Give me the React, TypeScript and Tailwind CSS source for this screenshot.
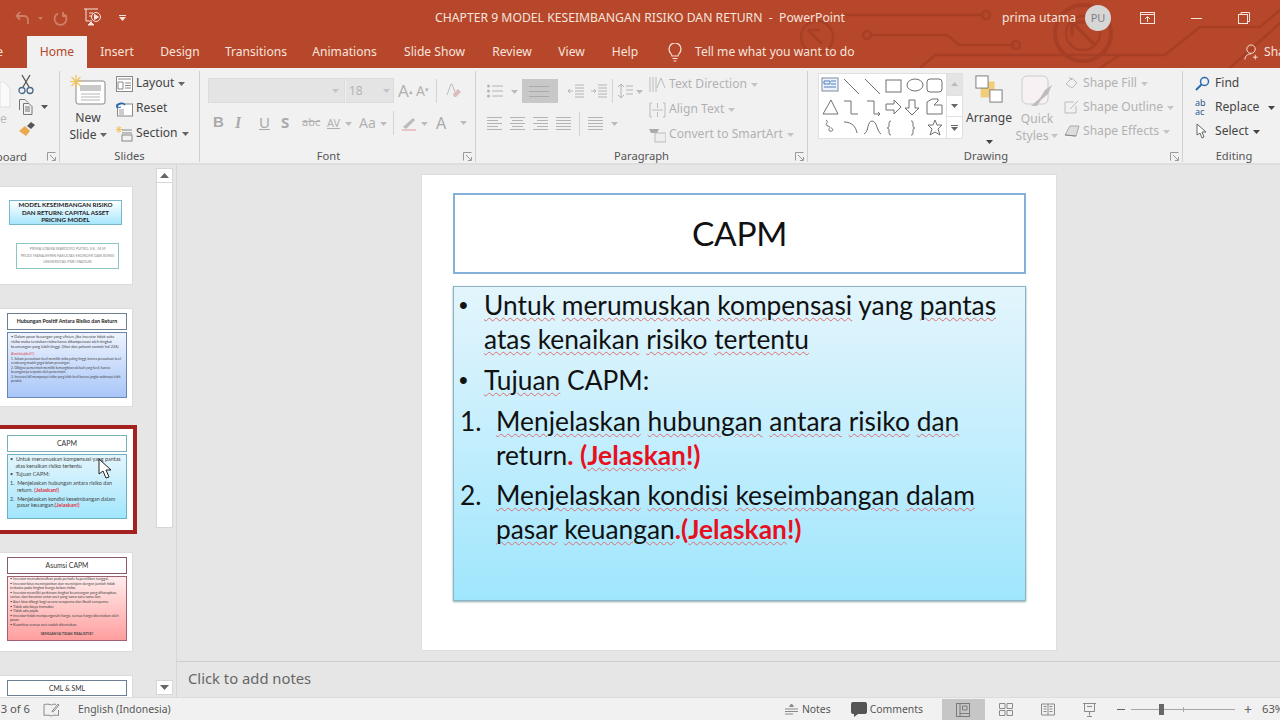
import React from "react";

const UI = "font-['Noto_Sans','Open_Sans',sans-serif]";
const Caret = ({ c = "#666" }: { c?: string }) => (
  <svg width="7" height="4" viewBox="0 0 7 4" className="inline-block shrink-0"><path d="M0 0h7L3.5 4z" fill={c} /></svg>
);
const Launcher = () => (
  <svg width="9" height="9" viewBox="0 0 9 9" fill="none" stroke="#9a9a9a" strokeWidth="1"><path d="M.5 8.5v-8h8M8.5 5v3.5H5M3 3l5 5" /></svg>
);
const Sep = ({ h = "h-[24px]" }: { h?: string }) => <div className={`w-px ${h} bg-[#d4d4d4]`} />;
const W = ({ children }: { children: React.ReactNode }) => (
  <span className="underline decoration-wavy decoration-[#dc7070] decoration-1 underline-offset-[2px]">{children}</span>
);

function Group({ w, label, children, launcher, labelClass = "" }: { w: string; label: string; children: React.ReactNode; launcher?: boolean; labelClass?: string }) {
  return (
    <div className={`relative flex flex-col h-[91px] mt-[3px] border-r border-[#d0d0d0] shrink-0 ${w}`}>
      <div className="flex h-[78px]">{children}</div>
      <div className={`flex items-center justify-center h-[13px] pt-[2px] text-[11.2px] text-[#555] ${labelClass}`}>{label}</div>
      {launcher && <div className="absolute right-[3px] bottom-[1px] leading-none"><Launcher /></div>}
    </div>
  );
}

const Line = ({ w, cls = "" }: { w: number; cls?: string }) => <i className={`block h-px bg-[#b4b4b4] ${cls}`} style={{ width: w }} />;
const AlignIcon = ({ a }: { a: "l" | "c" | "r" | "j" }) => {
  const s = a === "l" ? "items-start" : a === "c" ? "items-center" : a === "r" ? "items-end" : "items-stretch";
  return (
    <div className={`flex flex-col gap-[2px] w-[15px] ${s}`}>
      <Line w={15} /><Line w={a === "j" ? 15 : 11} /><Line w={15} /><Line w={a === "j" ? 15 : 11} /><Line w={15} />
    </div>
  );
};

function ShapesGallery() {
  const s = "#707070";
  return (
    <div className="flex w-[145px] h-[66px] mt-[2px] ml-[10px] bg-white border border-[#e0e0e0]">
      <svg width="127" height="64" viewBox="0 0 127 64" fill="none" stroke={s} strokeWidth="1" className="shrink-0">
        <rect x="3" y="4" width="16" height="13" stroke="#7a8aa0" fill="#eef3fb" />
        <path d="M5 7h6v3H5zM12 7h5M12 10h5M5 13h12" stroke="#4a7ac0" />
        <path d="M25 5l15 15M46 5l15 15" />
        <rect x="67" y="6" width="15" height="12" />
        <ellipse cx="96" cy="11" rx="8" ry="6" />
        <rect x="108" y="5" width="15" height="13" rx="3" />
        <path d="M12 26l7 14H4z" />
        <path d="M25 27h7v13h7M48 27h7v13h6m-2-2l2 2-2 2" />
        <path d="M67 30h8v-4l7 7-7 7v-4h-8zM96 26v8h4l-7 7-7-7h4v-8z" />
        <path d="M108 28l5-3h6v2l-4 4h8v9h-15z" />
        <path d="M7 46c4 2-3 5 2 6s-2 4 2 5 3-3 1-3M25 48c8 0 12 5 13 11M45 60c5-2 3-13 8-13s5 11 9 13M72 47c-2 0-2 1-2 4s-1 3-2 3c1 0 2 0 2 3s0 4 2 4M92 47c2 0 2 1 2 4s1 3 2 3c-1 0-2 0-2 3s0 4-2 4" />
        <path d="M116 46l2 5h5l-4 4 2 6-5-3-5 3 2-6-4-4h5z" />
      </svg>
      <div className="flex flex-col w-[16px] border-l border-[#e0e0e0]">
        <div className="flex-1 flex items-center justify-center bg-[#e4e4e4]"><svg width="7" height="4"><path d="M0 4h7L3.5 0z" fill="#bbb" /></svg></div>
        <div className="flex-1 flex items-center justify-center border-y border-[#e0e0e0]"><Caret /></div>
        <div className="flex-1 flex flex-col items-center justify-center gap-px"><i className="block w-[7px] h-px bg-[#666]" /><Caret /></div>
      </div>
    </div>
  );
}

function Ribbon() {
  const dis = "text-[#b1b1b1]";
  const row = "flex items-center h-[25px] whitespace-nowrap";
  return (
    <div className={`flex h-[95px] bg-[#f1f1f1] text-[12.1px] text-[#444] shrink-0 ${UI}`}>
      <Group w="w-[60px]" label="" launcher>
        <div className="w-[60px] relative">
          <svg width="11" height="26" viewBox="0 0 11 26" className="absolute left-0 top-[11px]"><path d="M0 0h4l6 6v19H0z" fill="#fafafa" stroke="#ddd" /></svg>
          <span className="absolute left-0 top-[42px] text-[#bbb] leading-none">e</span>
          <div className="flex flex-col items-start pl-[18px] pt-[3px]">
            <svg width="16" height="22" viewBox="0 0 16 22" fill="none" stroke="#4a6a8a" strokeWidth="1.3"><path d="M4 1l7 12M12 1L5 13" stroke="#555" /><circle cx="4" cy="16.5" r="3" /><circle cx="12" cy="16.5" r="3" /></svg>
            <div className="flex items-center gap-[7px] mt-[2px]">
              <svg width="16" height="17" viewBox="0 0 16 17" fill="none" stroke="#777"><path d="M1.5 12V1.5H7l3 3M5.5 5.5H11l3 3v8H5.5z" /><path d="M7 9h5M7 11h5M7 13h5" /></svg>
              <Caret c="#555" />
            </div>
            <svg width="18" height="16" viewBox="0 0 18 16" className="mt-[6px]"><path d="M1 10l6-5 5 5-4 5z" fill="#e9a94e" /><path d="M9 5l4-4 4 3-4 4z" fill="#555" /></svg>
          </div>
          <div className="absolute left-0 top-[79px] w-[30px] h-[13px] flex justify-end overflow-hidden text-[11.2px] text-[#555] leading-[13px]"><span className="whitespace-nowrap pr-[3px]">Clipboard</span></div>
        </div>
      </Group>
      <Group w="w-[140px]" label="Slides">
        <div className="flex flex-col items-center w-[56px] pt-[4px] leading-[17px]">
          <svg width="36" height="30" viewBox="0 0 36 30" fill="none">
            <rect x="6" y="6" width="29" height="23" rx="2" fill="#fff" stroke="#888" />
            <rect x="10" y="10" width="21" height="6" fill="#c9c9c9" />
            <path d="M11 19h19M11 22h19M11 25h19" stroke="#b5b5b5" />
            <path d="M6 0v13M0 6.5h13M1.500 2L10.500 11M10.500 2L1.500 11" stroke="#f0c35c" strokeWidth="1.2" />
          </svg>
          <span className="mt-[4px]">New</span>
          <span className="flex items-center gap-[3px]">Slide <Caret /></span>
        </div>
        <div className="flex flex-col">
          <div className={row}>
            <svg width="17" height="16" viewBox="0 0 17 16" fill="none" stroke="#888" className="mr-[3px]"><rect x=".5" y=".5" width="16" height="15" fill="#fff" /><path d="M2 3h13M2 6h5v7H2zM9 7h6M9 9.500h6M9 12h6" /></svg>
            Layout <span className="ml-[4px]"><Caret /></span>
          </div>
          <div className={row}>
            <svg width="17" height="16" viewBox="0 0 17 16" fill="none" stroke="#888" className="mr-[3px]"><rect x="1.5" y="3" width="15" height="12" fill="#fff" /><rect x="3" y="8" width="5" height="6" fill="#ccc" stroke="none" /><path d="M1 6c1-4 6-5 8-2" stroke="#2a6ab0" strokeWidth="1.6" /><path d="M0 3l1 4 4-1" stroke="#2a6ab0" /></svg>
            Reset
          </div>
          <div className={row}>
            <svg width="17" height="16" viewBox="0 0 17 16" fill="none" stroke="#888" className="mr-[3px]"><path d="M3 0v7M0 3.500h7M1 1l4 5M5 1L1 6" stroke="#f0c35c" /><path d="M6 4h10M6 7h10" /><rect x="6" y="9" width="10" height="6" /></svg>
            Section <span className="ml-[4px]"><Caret /></span>
          </div>
        </div>
      </Group>
      <Group w="w-[276px]" label="Font" launcher labelClass="pr-[18px]">
        <div className="flex flex-col pl-[8px] pt-[7px]">
          <div className="flex items-center h-[25px]">
            <div className="flex items-center justify-end w-[137px] h-[25px] bg-[#e4e4e4] border border-[#dcdcdc] pr-[5px]"><Caret c="#c4c4c4" /></div>
            <div className="flex items-center justify-between w-[49px] h-[25px] bg-[#e4e4e4] border border-[#dcdcdc] border-l-[#f1f1f1] px-[3px] text-[#b5b5b5] text-[12px]">18<Caret c="#c4c4c4" /></div>
            <span className={`ml-[4px] text-[17px] leading-none ${dis}`}>A<sup className="text-[7px]">▴</sup></span>
            <span className={`ml-[3px] text-[14px] leading-none ${dis}`}>A<sup className="text-[7px]">▾</sup></span>
            <div className="ml-[7px] mr-[7px]"><Sep /></div>
            <svg width="18" height="18" viewBox="0 0 18 18"><path d="M3 13l4-11h1l3 8" fill="none" stroke="#bbb" /><path d="M9 12l5-5 3 3-5 5H10z" fill="#ddbcbc" /></svg>
          </div>
          <div className={`flex items-center h-[25px] mt-[7px] pl-[5px] text-[14px] ${dis}`}>
            <b className="w-[22px] font-['Liberation_Sans',sans-serif] text-[15px] text-[#aaa]">B</b>
            <i className="w-[24px] font-['Liberation_Serif',serif] font-bold text-[16px] text-[#aaa]">I</i>
            <span className="w-[22px] underline text-[#aaa] text-[15px]">U</span>
            <b className="w-[21px] text-[#aaa] text-[15px]">S</b>
            <span className="w-[25px] line-through text-[11px]">abc</span>
            <span className="w-[18px] text-[11px] underline leading-none">AV</span>
            <span className="w-[14px]"><Caret c="#bbb" /></span>
            <span className="text-[14px] w-[21px]">Aa</span>
            <span className="w-[13px]"><Caret c="#bbb" /></span>
            <div className="mr-[6px]"><Sep /></div>
            <svg width="18" height="18" viewBox="0 0 18 18" fill="none"><path d="M3 13L13 4l2 2-9 9z" fill="#bbb" /><path d="M2 16h14" stroke="#e8c4c4" strokeWidth="2" /></svg>
            <span className="w-[13px] ml-[3px]"><Caret c="#bbb" /></span>
            <span className="ml-[2px] w-[24px] text-[16px] text-[#aaa]">A</span>
            <Caret c="#bbb" />
          </div>
        </div>
      </Group>
      <Group w="w-[332px]" label="Paragraph" launcher>
        <div className="flex flex-col pl-[11px] pt-[8px] w-[173px] shrink-0">
          <div className="flex items-center h-[24px]">
            <svg width="16" height="14" viewBox="0 0 16 14" fill="none" stroke="#b4b4b4"><circle cx="1.500" cy="2" r="1.500" fill="#b4b4b4" stroke="none" /><circle cx="1.500" cy="7" r="1.500" fill="#b4b4b4" stroke="none" /><circle cx="1.500" cy="12" r="1.500" fill="#b4b4b4" stroke="none" /><path d="M5 2h11M5 7h11M5 12h11" /></svg>
            <span className="ml-[8px] w-[11px]"><Caret c="#bbb" /></span>
            <div className="flex flex-col justify-center gap-[4px] w-[36px] h-[24px] bg-[#c8c8c8] px-[4px]"><i className="block h-px w-[20px] bg-[#aaa] ml-[3px]" /><i className="block h-px w-[20px] bg-[#aaa] ml-[3px]" /><i className="block h-px w-[20px] bg-[#aaa] ml-[3px]" /></div>
            <div className="ml-[10px]"><svg width="16" height="14" viewBox="0 0 16 14" fill="none" stroke="#b4b4b4"><path d="M7 1h9M7 4h9M7 7h9M7 10h9M7 13h9M5 7H0m2-2L0 7l2 2" /></svg></div>
            <div className="ml-[7px]"><svg width="16" height="14" viewBox="0 0 16 14" fill="none" stroke="#b4b4b4"><path d="M7 1h9M7 4h9M7 7h9M7 10h9M7 13h9M0 7h5M3 5l2 2-2 2" /></svg></div>
            <div className="mx-[5px]"><Sep /></div>
            <svg width="15" height="16" viewBox="0 0 15 16" fill="none" stroke="#b4b4b4"><path d="M3 1v14M0 4l3-3 3 3M0 12l3 3 3-3M8 3h7M8 7h7M8 11h7" /></svg>
            <span className="ml-[3px]"><Caret c="#bbb" /></span>
          </div>
          <div className="flex items-center h-[25px] mt-[8px] gap-[8px]">
            <AlignIcon a="l" /><AlignIcon a="c" /><AlignIcon a="r" /><AlignIcon a="j" />
            <Sep />
            <div className="flex gap-[3px]"><AlignIcon a="j" /></div>
            <Caret c="#bbb" />
          </div>
        </div>
        <div className={`flex flex-col pt-[1px] ${dis}`}>
          <div className={row}>
            <svg width="17" height="18" viewBox="0 0 17 18" fill="none" stroke="#bbb" className="mr-[3px]"><path d="M1 1v15M4 1v15M7 1v15" /><path d="M8 12l4-10 4 10" /></svg>
            Text Direction <span className="ml-[4px]"><Caret c="#c4c4c4" /></span>
          </div>
          <div className={row}>
            <svg width="17" height="16" viewBox="0 0 17 16" fill="none" stroke="#bbb" className="mr-[3px]"><path d="M3 1H1v14h2M14 1h2v14h-2M3 8h11M8.500 1v5M8.500 10v5" /></svg>
            Align Text <span className="ml-[4px]"><Caret c="#c4c4c4" /></span>
          </div>
          <div className={row}>
            <svg width="17" height="16" viewBox="0 0 17 16" className="mr-[3px]"><path d="M0 2h10l-2 4H2z" fill="#aaa" /><rect x="6" y="6" width="11" height="9" fill="#eee" stroke="#bbb" /></svg>
            Convert to SmartArt <span className="ml-[4px]"><Caret c="#c4c4c4" /></span>
          </div>
        </div>
      </Group>
      <Group w="w-[375px]" label="Drawing" launcher labelClass="pr-[18px]">
        <ShapesGallery />
        <div className="flex flex-col items-center w-[52px] pt-[4px] leading-[17px]">
          <svg width="30" height="30" viewBox="0 0 30 30"><rect x="11" y="7" width="10" height="10" fill="#f0cd78" /><rect x="6" y="14" width="10" height="10" fill="#f0cd78" /><rect x="1" y="1" width="13" height="13" fill="#fff" stroke="#777" /><rect x="16" y="16" width="13" height="13" fill="#fff" stroke="#777" /></svg>
          <span className="mt-[6px]">Arrange</span>
          <span className="mt-[6px]"><Caret c="#444" /></span>
        </div>
        <div className={`flex flex-col items-center w-[44px] pt-[4px] leading-[17px] ${dis}`}>
          <svg width="32" height="32" viewBox="0 0 32 32"><rect x="1" y="1" width="26" height="28" rx="5" fill="#f7f1f4" stroke="#ccc" /><path d="M10 31l9-8 5-8 7-5-4 9-7 6-4 6z" fill="#bdbdbd" /></svg>
          <span className="mt-[3px]">Quick</span>
          <span className="flex items-center gap-[3px]">Styles<Caret c="#c4c4c4" /></span>
        </div>
        <div className={`flex flex-col ml-[6px] ${dis}`}>
          <div className="flex items-center h-[24px] whitespace-nowrap">
            <svg width="14" height="14" viewBox="0 0 14 14" fill="none" stroke="#bbb" className="mr-[4px]"><path d="M1 8l6-6 5 5-5 5zM4 1l3 3" /></svg>
            Shape Fill <span className="ml-[4px]"><Caret c="#c4c4c4" /></span>
          </div>
          <div className="flex items-center h-[24px] whitespace-nowrap">
            <svg width="16" height="14" viewBox="0 0 16 14" fill="none" stroke="#bbb" className="mr-[3px] -ml-[1px]"><path d="M10 2H1v11h11V6M6 9l8-8" /></svg>
            Shape Outline <span className="ml-[4px]"><Caret c="#c4c4c4" /></span>
          </div>
          <div className="flex items-center h-[24px] whitespace-nowrap">
            <svg width="16" height="14" viewBox="0 0 16 14" className="mr-[3px] -ml-[1px]"><path d="M1 11l5-9h9l-3 10z" fill="#ddd" stroke="#aaa" /><path d="M1 11l11 1" stroke="#888" /></svg>
            Shape Effects <span className="ml-[4px]"><Caret c="#c4c4c4" /></span>
          </div>
        </div>
      </Group>
      <Group w="w-[98px] border-r-0" label="Editing" labelClass="pl-[4px]">
        <div className="flex flex-col pl-[12px]">
          <div className="flex items-center h-[24px] whitespace-nowrap">
            <svg width="15" height="15" viewBox="0 0 15 15" fill="none" stroke="#2a6ab0" strokeWidth="1.5" className="mr-[5px]"><circle cx="9.500" cy="5.500" r="4" /><path d="M6.500 8.500L1 14" strokeWidth="2" /></svg>
            Find
          </div>
          <div className="flex items-center h-[24px] whitespace-nowrap">
            <span className="w-[19px] mr-[1px] text-[9px] leading-[9px] text-[#2a5a90]">ab<br />ac</span>
            Replace <span className="ml-[9px]"><Caret c="#444" /></span>
          </div>
          <div className="flex items-center h-[24px] whitespace-nowrap">
            <svg width="14" height="16" viewBox="0 0 14 16" fill="#fff" stroke="#666" className="mr-[6px]"><path d="M2 1v11l3-2 2 5 2-1-2-5h4z" /></svg>
            Select <span className="ml-[4px]"><Caret c="#444" /></span>
          </div>
        </div>
      </Group>
    </div>
  );
}

function Tabs() {
  const tabs: [string, string][] = [["Insert", "w-[60px]"], ["Design", "w-[66px]"], ["Transitions", "w-[86px]"], ["Animations", "w-[91px]"], ["Slide Show", "w-[89px]"], ["Review", "w-[66px]"], ["View", "w-[53px]"], ["Help", "w-[54px]"]];
  return (
    <div className={`flex h-[32px] items-stretch text-[12.1px] text-[#f6e4de] relative ${UI}`}>
      <div className="w-[27px] overflow-hidden flex items-center justify-end shrink-0"><span className="pr-[24px]">File</span></div>
      <div className="w-[60px] flex items-center justify-center bg-[#f1f1f1] text-[#b7472a] shrink-0">Home</div>
      {tabs.map(([t, w]) => (
        <div key={t} className={`${w} flex items-center justify-center whitespace-nowrap shrink-0`}>{t}</div>
      ))}
      <div className="flex items-center ml-[15px]">
        <svg width="16" height="19" viewBox="0 0 16 19" fill="none" stroke="#f6e4de" strokeWidth="1.2"><path d="M5 13c0-2-3-3-3-7a6 6 0 0112 0c0 4-3 5-3 7zM5.500 15.500h5M6.500 18h3" /></svg>
        <span className="ml-[12px] whitespace-nowrap">Tell me what you want to do</span>
      </div>
      <div className="flex items-center ml-auto gap-[4px] w-[36px] overflow-hidden shrink-0">
        <svg width="16" height="18" viewBox="0 0 17 18" fill="none" stroke="#f6e4de" className="shrink-0"><circle cx="7.500" cy="6" r="4.500" /><path d="M1 17c0-4 3-6 6.500-6M12 12v5M9.500 14.500h5" /></svg>
        <span className="whitespace-nowrap">Share</span>
      </div>
    </div>
  );
}

function TitleBar() {
  return (
    <div className={`relative flex items-center h-[36px] text-[12.2px] text-[#f6e4de] ${UI}`}>
      <div className="flex items-center pl-[15px] w-[435px] shrink-0">
        <svg width="15" height="14" viewBox="0 0 15 14" fill="none" stroke="#cf7f68" strokeWidth="1.8"><path d="M5 1L1.500 5 5 8.500M2 5h7a4 4 0 014 4v4" /></svg>
        <span className="ml-[8px]"><svg width="5" height="3"><path d="M0 0h5L2.500 3z" fill="#cf7f68" /></svg></span>
        <svg width="15" height="15" viewBox="0 0 15 15" fill="none" stroke="#cf7f68" strokeWidth="1.8" className="ml-[10px]"><path d="M10 2.500a6 6 0 11-5 0M10 1v4h4" /></svg>
        <svg width="18" height="20" viewBox="0 0 18 20" fill="none" stroke="#f6e4de" className="ml-[16px]"><path d="M0 1h14M2 1v12h6M5 5h4M5 8h3" /><circle cx="12" cy="9" r="4.500" /><path d="M10.500 6.500l4 2.500-4 2.500z" fill="#f6e4de" /><path d="M4 17l3-3 3 3z" fill="#f6e4de" /></svg>
        <span className="ml-[17px]"><svg width="7" height="7" viewBox="0 0 7 7" fill="#f6e4de"><path d="M0 0h7v1H0zM0 2h7L3.500 6z" /></svg></span>
      </div>
      <div className="whitespace-nowrap w-[567px] shrink-0">CHAPTER 9 MODEL KESEIMBANGAN RISIKO DAN RETURN&nbsp; -&nbsp; PowerPoint</div>
      <div className="whitespace-nowrap w-[74px] shrink-0">prima utama</div>
      <div className="ml-[9px] w-[26px] h-[26px] rounded-full bg-[#d6d6d6] text-[#7f7f7f] text-[11px] flex items-center justify-center shrink-0">PU</div>
      <svg width="15" height="12" viewBox="0 0 15 12" fill="none" stroke="#f6e4de" className="ml-[29px]"><rect x=".5" y=".5" width="14" height="11" /><path d="M0 2.500h15M7.500 10V5M5 7l2.500-2.500L10 7" /></svg>
      <i className="block ml-[36px] w-[11px] h-px bg-[#f6e4de]" />
      <svg width="12" height="12" viewBox="0 0 12 12" fill="none" stroke="#f6e4de" className="ml-[36px]"><rect x=".5" y="2.500" width="9" height="9" /><path d="M3 2.500v-2h8.500v9h-2" /></svg>
    </div>
  );
}

const Thumb = ({ children, sel = false, h = "h-[99px]" }: { children: React.ReactNode; sel?: boolean; h?: string }) => (
  <div className={`relative bg-white shrink-0 ${h} ${sel ? "w-[137px] border-[4px] border-l-0 border-[#a3211f] pl-[7px] pt-[6px] pr-[6px]" : "w-[133px] border border-[#dcdcdc] border-l-0 pl-[7px] pt-[4px] pr-[5px]"}`}>{children}</div>
);

function ThumbPanel() {
  return (
    <div className="relative flex w-[177px] shrink-0 bg-[#e6e6e6] border-r border-[#d6d6d6] font-['Lato',sans-serif] overflow-hidden">
      <div className="flex flex-col gap-[23px] pt-[21px] w-[156px] shrink-0 text-[#333]">
        <Thumb>
          <div className="mt-[9px] ml-[2px] w-[113px] h-[25px] border border-[#7ab7cc] bg-linear-to-b from-white to-[#a6e6fb] text-[6.2px] leading-[7.6px] font-bold text-center text-[#222] whitespace-nowrap">MODEL KESEIMBANGAN RISIKO<br />DAN RETURN: CAPITAL ASSET<br />PRICING MODEL</div>
          <div className="mt-[18px] ml-[9px] w-[103px] h-[26px] border border-[#8ec5c5] flex flex-col justify-center text-[3.7px] leading-[6.5px] text-center text-[#888] whitespace-nowrap">
            <span>PRIMA UTAMA WARDOYO PUTRO, S.E., M.M</span><span>PRODI MANAJEMEN FAKULTAS EKONOMI DAN BISNIS</span><span>UNIVERSITAS PGRI MADIUN</span>
          </div>
        </Thumb>
        <Thumb>
          <div className="w-[120px] h-[17px] border border-[#6d8092] flex items-center justify-center text-[5.3px] font-bold text-[#222]">Hubungan Positif Antara Risiko dan Return</div>
          <div className="mt-[2px] w-[120px] h-[66px] border border-[#6a86b0] bg-linear-to-b from-[#eef3fd] to-[#a9c6f8] px-[3px] pt-[1px] text-[3.9px] leading-[5.1px] text-[#444]">
            <p>• Dalam pasar keuangan yang efisien, jika investor tidak suka risiko maka tentukan risiko harus dikompensasi oleh tingkat keuntungan yang lebih tinggi. (lihat dan pahami contoh hal 226)</p>
            <p className="text-[#d44] mt-[2px]">Analisis(dst!!!)</p>
            <p className="mt-[1px] text-[3.2px] leading-[4px]">1. Saham perusahaan kecil memiliki risiko paling tinggi, karena perusahaan kecil cenderung mudah gagal dalam persaingan.</p>
            <p className="mt-[1px] text-[3.2px] leading-[4px]">2. Obligasi pemerintah memiliki kemungkinan default yang kecil, karena keuangannya terjamin oleh pemerintah.</p>
            <p className="mt-[1px] text-[3.2px] leading-[4px]">3. Investasi bill mempunyai risiko yang lebih kecil karena jangka waktunya lebih pendek.</p>
          </div>
        </Thumb>
        <div className="-my-[5px]">
          <Thumb sel h="h-[109px]">
            <div className="w-[120px] h-[17px] border border-[#7ab0b8] flex items-center justify-center text-[7px] text-[#333]">CAPM</div>
            <div className="mt-[2px] w-[120px] h-[65px] border border-[#6fb0c0] bg-linear-to-b from-[#e4f5fc] to-[#a0e6fd] pl-[2px] pt-[1px] text-[5.4px] leading-[6.9px] text-[#444] whitespace-nowrap">
              <p>• &nbsp;Untuk merumuskan kompensasi yang pantas</p>
              <p className="pl-[4px]">&nbsp;atas kenaikan risiko tertentu</p>
              <p className="mt-[1.5px]">• &nbsp;Tujuan CAPM:</p>
              <p className="mt-[1.5px]">1. &nbsp;Menjelaskan hubungan antara risiko dan</p>
              <p className="pl-[7px]">return. <b className="text-[#e03040]">(Jelaskan!)</b></p>
              <p className="mt-[2px]">2. &nbsp;Menjelaskan kondisi keseimbangan dalam</p>
              <p className="pl-[7px]">pasar keuangan.<b className="text-[#e03040]">(Jelaskan!)</b></p>
            </div>
          </Thumb>
        </div>
        <Thumb h="h-[100px]">
          <div className="w-[120px] h-[17px] border border-[#8a5a68] flex items-center justify-center text-[6.8px] text-[#333]">Asumsi CAPM</div>
          <div className="mt-[2px] w-[120px] h-[65px] overflow-hidden border border-[#a06070] bg-linear-to-b from-[#ffecec] to-[#ff9e9e] px-[2px] text-[3.7px] leading-[4.6px] text-[#444]">
            <p>• Investor memaksimalkan pada periode kepemilikan tunggal.</p>
            <p>• Investor bisa meminjamkan dan meminjam dengan jumlah tidak terbatas pada tingkat bunga bebas risiko.</p>
            <p>• Investor memiliki perkiraan tingkat keuntungan yang diharapkan, varian, dan kovarian antar aset yang sama satu sama lain.</p>
            <p>• Aset bisa dibagi-bagi secara sempurna dan likuid sempurna.</p>
            <p>• Tidak ada biaya transaksi.</p>
            <p>• Tidak ada pajak.</p>
            <p>• Investor tidak mempengaruhi harga, semua harga ditentukan oleh pasar.</p>
            <p>• Kuantitas semua aset sudah ditentukan.</p>
            <p className="mt-[4px] text-center font-bold">SEMUANYA TIDAK REALISTIS!!</p>
          </div>
        </Thumb>
        <Thumb h="h-[60px]">
          <div className="w-[120px] h-[16px] border border-[#6d8092] flex items-center justify-center text-[6.8px] text-[#333]">CML &amp; SML</div>
        </Thumb>
      </div>
      <div className="mt-[3px] mb-[3px] w-[17px] flex flex-col shrink-0 h-[527px]">
        <div className="h-[15px] bg-white border border-[#d6d6d6] flex items-center justify-center"><svg width="9" height="5"><path d="M0 5h9L4.500 0z" fill="#666" /></svg></div>
        <div className="h-[345px] bg-white border-x border-b border-[#d6d6d6]" />
        <div className="flex-1" />
        <div className="h-[15px] bg-white border border-[#d6d6d6] flex items-center justify-center"><svg width="9" height="5"><path d="M0 0h9L4.500 5z" fill="#666" /></svg></div>
      </div>
      <svg width="14" height="22" viewBox="0 0 14 22" className="absolute left-[98px] top-[293px]"><path d="M1 1v15l4-3 3 7 3-1-3-7h5z" fill="#fff" stroke="#222" /></svg>
    </div>
  );
}

function Slide() {
  const B = "w-[25px] font-['Liberation_Sans',sans-serif] text-[25px]";
  return (
    <div className="w-[636px] h-[477px] bg-white border border-[#dedede] pt-[18px] pl-[31px] font-['Lato',sans-serif]">
      <div className="w-[573px] h-[81px] border-2 border-[#86b0dc] flex items-center justify-center text-[33.5px] text-[#111] tracking-[-0.3px]">CAPM</div>
      <div className="mt-[12px] w-[573px] h-[315px] border border-[#8cb2c8] bg-linear-to-b from-[#e3f5fc] to-[#9fe6fd] shadow-[0_1px_2px_#8aa] pt-[1px] text-[26.35px] leading-[34px] text-[#111] whitespace-nowrap">
        <div className="flex pl-[5px]"><span className={B}>•</span><div><W>Untuk</W> <W>merumuskan</W> <W>kompensasi</W> yang <W>pantas</W><br /><W>atas</W> <W>kenaikan</W> <W>risiko</W> <W>tertentu</W></div></div>
        <div className="flex pl-[5px] mt-[7px]"><span className={B}>•</span><div><W>Tujuan</W> CAPM:</div></div>
        <div className="flex pl-[6px] mt-[7px]"><span className="w-[36px]">1.</span><div><W>Menjelaskan</W> <W>hubungan</W> <W>antara</W> <W>risiko</W> <W>dan</W><br />return<b className="text-[#e8101c]">. (<W>Jelaskan</W>!)</b></div></div>
        <div className="flex pl-[6px] mt-[6px]"><span className="w-[36px]">2.</span><div><W>Menjelaskan</W> <W>kondisi</W> <W>keseimbangan</W> <W>dalam</W><br /><W>pasar</W> <W>keuangan</W><b className="text-[#e8101c]">.(<W>Jelaskan</W>!)</b></div></div>
      </div>
    </div>
  );
}

function StatusBar() {
  const ic = "#8a8a8a";
  return (
    <div className={`flex items-center h-[23px] pt-[1px] bg-[#f1f1f1] border-t border-[#dcdcdc] text-[10.4px] text-[#555] shrink-0 whitespace-nowrap ${UI}`}>
      <div className="w-[30px] overflow-hidden flex justify-end shrink-0 text-[11.2px]"><span>Slide 3 of 6</span></div>
      <svg width="17" height="14" viewBox="0 0 17 14" fill="none" stroke={ic} className="ml-[13px]"><path d="M8.500 2C7 1 3 1 1 1.500v11C3 12 7 12 8.500 13M8.500 2C10 1 12 1 13 1.500M8.500 13c1.500-1 4-1 7-.5V7M15 1l-5 6-1 2 2-1 5-6z" /></svg>
      <span className="ml-[18px]">English (Indonesia)</span>
      <div className="ml-auto flex items-center">
        <svg width="13" height="11" viewBox="0 0 13 11" fill="none" stroke={ic}><path d="M6.500 0l2 2.500h-4z" fill={ic} /><path d="M0 5h13M0 7.500h13M0 10h8" /></svg>
        <span className="ml-[4px]">Notes</span>
        <svg width="16" height="15" viewBox="0 0 16 15" className="ml-[20px]"><path d="M2 0h12a2 2 0 012 2v8a2 2 0 01-2 2H7l-4 3v-3H2a2 2 0 01-2-2V2a2 2 0 012-2z" fill="#555" /></svg>
        <span className="ml-[3px]">Comments</span>
        <div className="ml-[19px] w-[43px] h-[22px] bg-[#c6c6c6] flex items-center justify-center">
          <svg width="14" height="14" viewBox="0 0 14 14" fill="none" stroke="#7a7a7a"><rect x=".5" y=".5" width="13" height="13" /><path d="M4 .5v13M6.500 3h4.500v4H6.500zM4 10.500h9.500" /></svg>
        </div>
        <svg width="14" height="13" viewBox="0 0 14 13" fill="none" stroke={ic} className="ml-[14px]"><path d="M.5.500h5.500v5H.5zM8 .5h5.500v5H8zM.5 7.500h5.500v5H.5zM8 7.500h5.500v5H8z" /></svg>
        <svg width="14" height="13" viewBox="0 0 14 13" fill="none" stroke={ic} className="ml-[28px]"><path d="M.5 1h13v11H.5zM7 1v11M2.500 3.500h3M2.500 6h3M2.500 8.500h3M8.500 3.500h3M8.500 6h3M8.500 8.500h3" /></svg>
        <svg width="13" height="14" viewBox="0 0 13 14" fill="none" stroke={ic} className="ml-[28px]"><path d="M0 .5h13M1.500 .5v8h10v-8M4 3.500h5M6.500 8.500v4M4 13.500h5" /></svg>
        <i className="block ml-[21px] w-[8px] h-px bg-[#666]" />
        <div className="relative ml-[6px] w-[104px] h-[1px] bg-[#a5a5a5]">
          <i className="absolute left-[28px] top-[-5px] block w-[5px] h-[11px] bg-[#666]" />
          <i className="absolute left-[52px] top-[-2px] block w-px h-[5px] bg-[#aaa]" />
        </div>
        <span className="ml-[9px] text-[14px] text-[#666] leading-none">+</span>
        <span className="ml-[10px] w-[18px] overflow-hidden text-[11.2px]">63%</span>
      </div>
    </div>
  );
}

export default function App() {
  return (
    <div className="w-[1280px] h-[720px] overflow-hidden flex flex-col bg-[#e6e6e6]">
      <div className="relative bg-[#b7472a] shrink-0 overflow-hidden">
        <svg width="1280" height="68" viewBox="0 0 1280 68" fill="none" stroke="#a63f25" strokeWidth="2.5" className="absolute left-0 top-0">
          <path d="M840 15h142" /><circle cx="986" cy="15" r="4" />
          <circle cx="867" cy="35" r="4" /><path d="M871 35h76l12 10h56" /><circle cx="1016" cy="45" r="4" />
          <path d="M920 68l15-13h230l35-28h60l20-17" />
          <circle cx="1083" cy="33" r="28" strokeWidth="4" /><circle cx="1083" cy="33" r="17" />
          <path d="M1072 22h16M1072 22v14M1072 22l22 22" strokeWidth="3.5" />
          <circle cx="817" cy="37" r="16" /><path d="M808 30h12M808 30l14 14" />
          <path d="M1100 68l20-13M1230 68l50-45" />
        </svg>
        <div className="relative"><TitleBar /><Tabs /></div>
      </div>
      <Ribbon />
      <div className="h-[2px] bg-[#dedede] shrink-0" />
      <div className="flex flex-1 min-h-0">
        <ThumbPanel />
        <div className="flex-1 flex flex-col min-w-0">
          <div className="h-[497px] flex justify-center pt-[9px] pl-[21px] border-b border-[#cfcfcf] shrink-0 overflow-hidden"><Slide /></div>
          <div className={`flex-1 flex items-center pl-[11px] pb-[2px] text-[14.8px] text-[#666] ${UI}`}>Click to add notes</div>
        </div>
      </div>
      <StatusBar />
    </div>
  );
}
